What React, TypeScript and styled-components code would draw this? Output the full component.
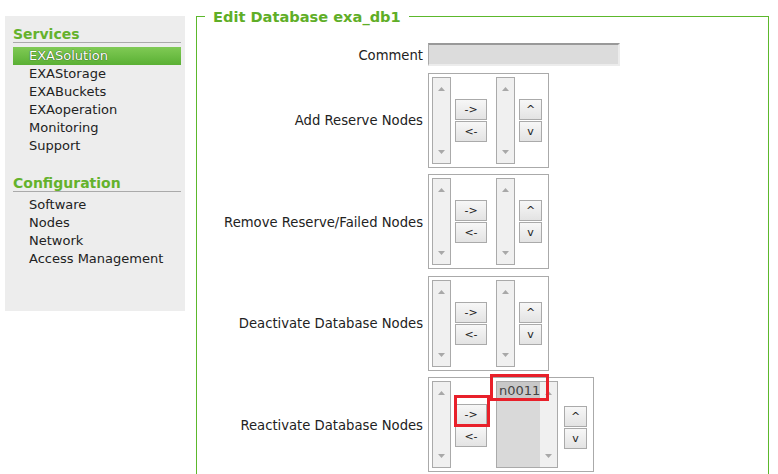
import { FC, ReactNode } from 'react';
import styled, { createGlobalStyle } from 'styled-components';

const GlobalStyle = createGlobalStyle`
  html, body {
    margin: 0;
    padding: 0;
    background: #fff;
  }
  body {
    font-family: 'DejaVu Sans', Verdana, sans-serif;
    font-size: 13px;
    color: #222;
  }
`;

const green = '#5cb82c';

const services = ['EXASolution', 'EXAStorage', 'EXABuckets', 'EXAoperation', 'Monitoring', 'Support'];
const configuration = ['Software', 'Nodes', 'Network', 'Access Management'];

type PickerProps = {
  label: string;
  wide?: boolean;
  items?: string[];
  marked?: boolean;
};

const pickers: PickerProps[] = [
  { label: 'Add Reserve Nodes' },
  { label: 'Remove Reserve/Failed Nodes' },
  { label: 'Deactivate Database Nodes' },
  { label: 'Reactivate Database Nodes', wide: true, items: ['n0011'], marked: true },
];

const Arrow: FC<{ up?: boolean }> = ({ up }) => (
  <svg width="7" height="4" viewBox="0 0 7 4">
    <path d={up ? 'M0 4 L3.5 0 L7 4 Z' : 'M0 0 L3.5 4 L7 0 Z'} fill="#a8a8a8" />
  </svg>
);

const ScrollTrack: FC = () => (
  <Track>
    <Arrow up />
    <Arrow />
  </Track>
);

const NodePicker: FC<PickerProps> = ({ wide, items, marked }) => (
  <PickerBox>
    <ListBox $width={19}>
      <ScrollTrack />
    </ListBox>
    <ButtonStack $offset={marked ? 2 : 0}>
      <SmallButton $width={32}>-&gt;</SmallButton>
      <SmallButton $width={32}>&lt;-</SmallButton>
    </ButtonStack>
    <ListBox $width={wide ? 62 : 19} $gapLeft={9}>
      {wide && (
        <Options>
          {items?.map((item) => (
            <Option key={item}>{item}</Option>
          ))}
        </Options>
      )}
      <ScrollTrack />
    </ListBox>
    <ButtonStack $gapLeft={wide ? 6 : 4} $offset={marked ? 5 : 0}>
      <SmallButton $width={23}>^</SmallButton>
      <SmallButton $width={23}>v</SmallButton>
    </ButtonStack>
    {marked && (
      <>
        <Marker $x={25} $y={17} $w={36} $h={32} />
        <Marker $x={61} $y={-4} $w={59} $h={27} />
      </>
    )}
  </PickerBox>
);

const NavSection: FC<{ title: string; children: ReactNode }> = ({ title, children }) => (
  <Section>
    <NavHeading>{title}</NavHeading>
    {children}
  </Section>
);

export default function App() {
  return (
    <>
      <GlobalStyle />
      <Page>
        <Sidebar>
          <NavSection title="Services">
            {services.map((s, i) => (
              <NavItem key={s} $active={i === 0}>
                {s}
              </NavItem>
            ))}
          </NavSection>
          <NavSection title="Configuration">
            {configuration.map((s) => (
              <NavItem key={s}>{s}</NavItem>
            ))}
          </NavSection>
        </Sidebar>
        <Fieldset>
          <Legend>Edit Database exa_db1</Legend>
          <FormGrid>
            <FieldLabel>Comment</FieldLabel>
            <CommentInput type="text" />
            {pickers.map((p) => (
              <Row key={p.label}>
                <FieldLabel>{p.label}</FieldLabel>
                <NodePicker {...p} />
              </Row>
            ))}
          </FormGrid>
        </Fieldset>
      </Page>
    </>
  );
}

const Page = styled.div`
  display: flex;
  align-items: flex-start;
  padding: 6px 0 0 5px;
  height: 474px;
  box-sizing: border-box;
  overflow: hidden;
`;

const Sidebar = styled.nav`
  width: 180px;
  height: 295px;
  margin-top: 10px;
  padding: 10px 4px 0 8px;
  box-sizing: border-box;
  background: #ededed;
  flex-shrink: 0;
`;

const Section = styled.div`
  & + & {
    margin-top: 20px;
  }
`;

const NavHeading = styled.div`
  color: #64b22c;
  font-size: 14px;
  font-weight: bold;
  line-height: 16px;
  border-bottom: 1px solid #aaa;
  margin-bottom: 4px;
`;

const NavItem = styled.div<{ $active?: boolean }>`
  height: 18px;
  line-height: 18px;
  padding-left: 16px;
  color: ${(p) => (p.$active ? '#fff' : '#222')};
  text-shadow: ${(p) =>
    p.$active ? '0 0 1px rgba(0, 0, 0, 0.6), 0 0 1px rgba(0, 0, 0, 0.4)' : 'none'};
  background: ${(p) => (p.$active ? 'linear-gradient(#80ca55, #5ab034)' : 'none')};
`;

const Fieldset = styled.fieldset`
  margin: 0 9px 0 11px;
  padding: 0;
  flex: 1;
  height: 520px;
  border: 1px solid ${green};
  min-width: 0;
`;

const Legend = styled.legend`
  margin-left: 8px;
  padding: 0 8px;
  color: #5fae27;
  font-size: 14.6px;
  font-weight: bold;
  line-height: 21px;
`;

const FormGrid = styled.div`
  display: grid;
  grid-template-columns: 226px auto;
  column-gap: 5px;
  row-gap: 6.5px;
  align-items: center;
  justify-items: start;
  margin-top: 16px;
`;

const Row = styled.div`
  display: contents;
`;

const FieldLabel = styled.label`
  justify-self: end;
  white-space: nowrap;
  font-size: 13.2px;
  padding-top: 1px;
`;

const CommentInput = styled.input`
  width: 192px;
  height: 23px;
  box-sizing: border-box;
  margin: 0;
  background: #dcdcdc;
  border-style: solid;
  border-width: 2px 2px 2px 1px;
  border-color: #999 #ececec #ececec #aaa;
`;

const PickerBox = styled.div`
  position: relative;
  display: flex;
  align-items: center;
  height: 95px;
  box-sizing: border-box;
  padding: 3px 6px 3px 3px;
  border: 1px solid #aaa;
`;

const ListBox = styled.div<{ $width: number; $gapLeft?: number }>`
  display: flex;
  width: ${(p) => p.$width}px;
  height: 100%;
  box-sizing: border-box;
  margin-left: ${(p) => p.$gapLeft ?? 0}px;
  border: 1px solid #aaa;
  background: #f0f0f0;
`;

const Options = styled.div`
  flex: 1;
  background: #d9d9d9;
`;

const Option = styled.div`
  height: 18px;
  line-height: 18px;
  padding-left: 2px;
  background: #c8c8c8;
  color: #444;
`;

const Track = styled.div`
  width: 17px;
  flex-shrink: 0;
  margin-left: auto;
  display: flex;
  flex-direction: column;
  align-items: center;
  justify-content: space-between;
  padding: 9px 0;
  box-sizing: border-box;
  background: #f0f0f0;
`;

const ButtonStack = styled.div<{ $gapLeft?: number; $offset?: number }>`
  display: flex;
  flex-direction: column;
  gap: 1px;
  margin-left: ${(p) => p.$gapLeft ?? 4}px;
  margin-top: ${(p) => p.$offset ?? 0}px;
`;

const SmallButton = styled.button<{ $width: number }>`
  width: ${(p) => p.$width}px;
  height: 21px;
  padding: 0;
  margin: 0;
  font-family: 'DejaVu Sans', Verdana, sans-serif;
  font-size: 11px;
  color: #222;
  border: 1px solid #aaa;
  border-radius: 0;
  background: linear-gradient(#f7f7f7, #e3e3e3);
`;

const Marker = styled.div<{ $x: number; $y: number; $w: number; $h: number }>`
  position: absolute;
  left: ${(p) => p.$x}px;
  top: ${(p) => p.$y}px;
  width: ${(p) => p.$w}px;
  height: ${(p) => p.$h}px;
  box-sizing: border-box;
  border: 3px solid #e8202a;
  pointer-events: none;
`;
